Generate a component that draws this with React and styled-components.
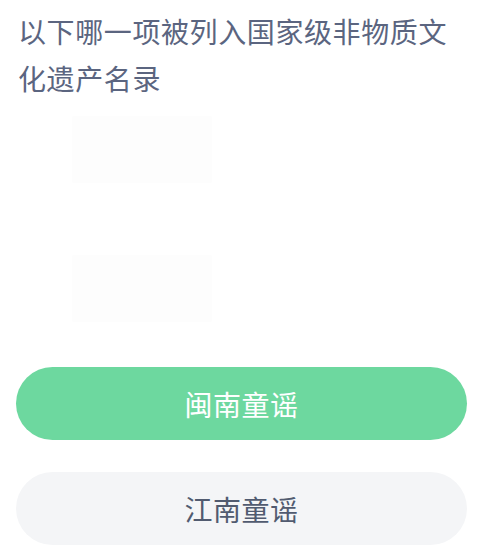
import React from "react";
import styled, { createGlobalStyle } from "styled-components";

const Global = createGlobalStyle`
  html, body { margin: 0; padding: 0; background: #ffffff; }
  body { font-family: "Noto Sans CJK SC", "Noto Sans", sans-serif; }
`;

const Page = styled.div`
  width: 478px;
  height: 548px;
  box-sizing: border-box;
  padding: 8px 11px 0 16px;
  display: flex;
  flex-direction: column;
  overflow: hidden;
`;

const Question = styled.h1`
  margin: 0 0 0 2px;
  font-size: 28px;
  font-weight: 400;
  line-height: 47px;
  color: #5b6580;
  letter-spacing: 0.6px;
`;

const Gallery = styled.div`
  height: 265px;
  display: flex;
  flex-direction: column;
  gap: 72px;
  padding: 14px 0 0 56px;
  box-sizing: border-box;
`;

const Ghost = styled.div`
  width: 140px;
  height: 67px;
  background: #fdfdfd;
  border-radius: 2px;
`;

const Options = styled.div`
  display: flex;
  flex-direction: column;
  gap: 32px;
`;

const Option = styled.button`
  height: 73px;
  width: 451px;
  border: none;
  border-radius: 37px;
  background: ${(p) => (p.$selected ? "#6dd89f" : "#f4f5f7")};
  color: ${(p) => (p.$selected ? "#ffffff" : "#515b70")};
  font-family: inherit;
  font-size: 28px;
  font-weight: 400;
  letter-spacing: 0.5px;
  display: flex;
  align-items: center;
  justify-content: center;
  padding: 0;
  cursor: pointer;
`;

export default function App() {
  return (
    <>
      <Global />
      <Page>
        <Question>以下哪一项被列入国家级非物质文化遗产名录</Question>
        <Gallery>
          <Ghost />
          <Ghost />
        </Gallery>
        <Options>
          <Option $selected>闽南童谣</Option>
          <Option>江南童谣</Option>
        </Options>
      </Page>
    </>
  );
}
